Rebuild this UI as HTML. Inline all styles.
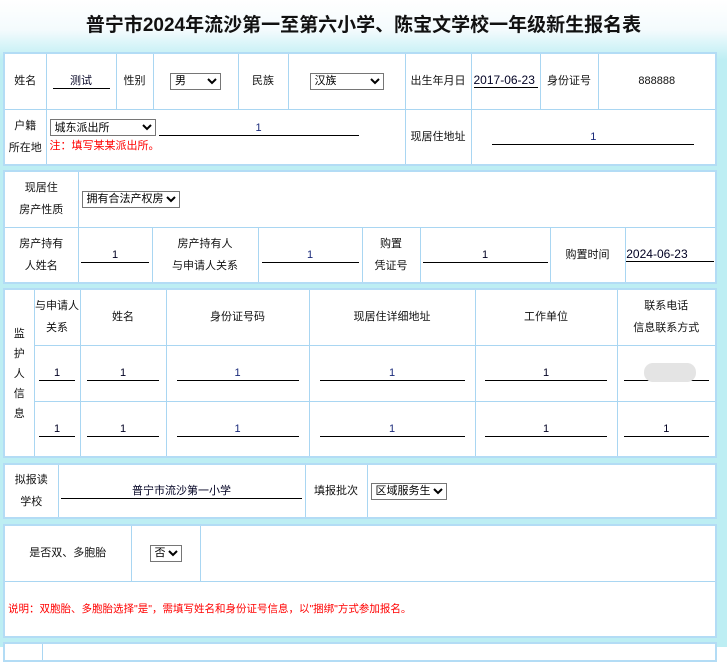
<!DOCTYPE html>
<html><head><meta charset="utf-8">
<style>
body{margin:0;width:727px;height:647px;overflow:hidden;background:#fff;font-family:"Liberation Sans","Noto Sans CJK SC",sans-serif;font-size:11px;color:#111;position:relative}
.bg{position:absolute;left:0;top:0;width:727px;height:647px;background:linear-gradient(180deg,#fff 0,#f4fbfd 30px,#d6f4f8 46px,#bdeef3 60px,#bdeef3 100%)}
h1{position:absolute;left:0;width:727px;top:10px;margin:0;text-align:center;font-size:19px;font-weight:bold;color:#111;font-family:"Liberation Sans","Noto Sans CJK SC",sans-serif}
table{position:absolute;left:3px;width:714px;border-collapse:collapse;table-layout:fixed;background:#fff;border:2px solid #b3dcf5}
td{border:1px solid #a9d6f2;text-align:center;padding:0;line-height:22px;overflow:hidden;white-space:nowrap}
.u{display:inline-block;border-bottom:1px solid #000;text-align:center;line-height:14px;font-size:11px;color:#002}
.ul{text-align:left}
select{font-size:11px;height:17px;padding:0;border:1px solid #767676;border-radius:0;background:#fff;color:#000;font-family:"Liberation Sans","Noto Sans CJK SC",sans-serif;vertical-align:middle}
.red{color:#f00}
.b{color:#1a2a7a}
</style></head><body>
<div class="bg"></div>
<h1>普宁市2024年流沙第一至第六小学、陈宝文学校一年级新生报名表</h1>

<table style="top:52px;height:112px">
<colgroup><col style="width:42px"><col style="width:70px"><col style="width:37px"><col style="width:85px"><col style="width:50px"><col style="width:117px"><col style="width:66px"><col style="width:69px"><col style="width:58px"><col></colgroup>
<tr style="height:56px"><td>姓名</td><td><span class="u" style="width:57px">测试</span></td><td>性别</td><td><select style="width:51px"><option>男</option></select></td><td>民族</td><td><select style="width:74px"><option>汉族</option></select></td><td>出生年月日</td><td><span class="u ul" style="width:64px;font-size:12px">2017-06-23</span></td><td>身份证号</td><td>888888</td></tr>
<tr style="height:56px"><td>户籍<br>所在地</td><td colspan="5" style="text-align:left;padding-left:3px;line-height:18px"><select style="width:106px"><option>城东派出所</option></select> <span class="u b" style="width:200px">1</span><br><span class="red">注：填写某某派出所。</span></td><td>现居住地址</td><td colspan="3"><span class="u b" style="width:202px">1</span></td></tr>
</table>

<table style="top:170px;height:112px">
<colgroup><col style="width:74px"><col style="width:74px"><col style="width:106px"><col style="width:104px"><col style="width:58px"><col style="width:130px"><col style="width:75px"><col></colgroup>
<tr style="height:56px"><td>现居住<br>房产性质</td><td colspan="7" style="text-align:left;padding-left:3px"><select style="width:98px"><option>拥有合法产权房</option></select></td></tr>
<tr style="height:56px"><td>房产持有<br>人姓名</td><td><span class="u" style="width:68px">1</span></td><td>房产持有人<br>与申请人关系</td><td><span class="u b" style="width:97px">1</span></td><td>购置<br>凭证号</td><td><span class="u" style="width:125px">1</span></td><td>购置时间</td><td><span class="u ul" style="width:88px;font-size:12px">2024-06-23</span></td></tr>
</table>

<table style="top:288px;height:169px">
<colgroup><col style="width:30px"><col style="width:46px"><col style="width:86px"><col style="width:143px"><col style="width:166px"><col style="width:142px"><col></colgroup>
<tr style="height:56px"><td rowspan="3" style="line-height:20px;padding-top:2px">监<br>护<br>人<br>信<br>息</td><td>与申请人<br>关系</td><td>姓名</td><td>身份证号码</td><td>现居住详细地址</td><td>工作单位</td><td>联系电话<br>信息联系方式</td></tr>
<tr style="height:56px"><td><span class="u" style="width:36px">1</span></td><td><span class="u" style="width:72px">1</span></td><td><span class="u b" style="width:122px">1</span></td><td><span class="u b" style="width:145px">1</span></td><td><span class="u" style="width:122px">1</span></td><td style="position:relative"><span class="u" style="width:85px">&nbsp;</span><span style="position:absolute;left:26px;top:17px;width:52px;height:19px;border-radius:9px;background:#e4e4e4"></span></td></tr>
<tr style="height:56px"><td><span class="u" style="width:36px">1</span></td><td><span class="u" style="width:72px">1</span></td><td><span class="u b" style="width:122px">1</span></td><td><span class="u b" style="width:145px">1</span></td><td><span class="u" style="width:122px">1</span></td><td><span class="u" style="width:85px">1</span></td></tr>
</table>

<table style="top:463px;height:56px">
<colgroup><col style="width:54px"><col style="width:247px"><col style="width:62px"><col></colgroup>
<tr><td>拟报读<br>学校</td><td><span class="u" style="width:241px">普宁市流沙第一小学</span></td><td>填报批次</td><td style="text-align:left;padding-left:3px"><select style="width:76px"><option>区域服务生</option></select></td></tr>
</table>

<table style="top:524px;height:113px">
<colgroup><col style="width:127px"><col style="width:69px"><col></colgroup>
<tr style="height:56px"><td>是否双、多胞胎</td><td><select style="width:32px"><option>否</option></select></td><td></td></tr>
<tr style="height:56px"><td colspan="3" class="red" style="text-align:left;padding-left:3px;font-size:10.5px">说明：双胞胎、多胞胎选择"是"，需填写姓名和身份证号信息，以"捆绑"方式参加报名。</td></tr>
</table>

<table style="top:642px;height:20px">
<colgroup><col style="width:38px"><col></colgroup>
<tr><td></td><td></td></tr>
</table>
</body></html>
